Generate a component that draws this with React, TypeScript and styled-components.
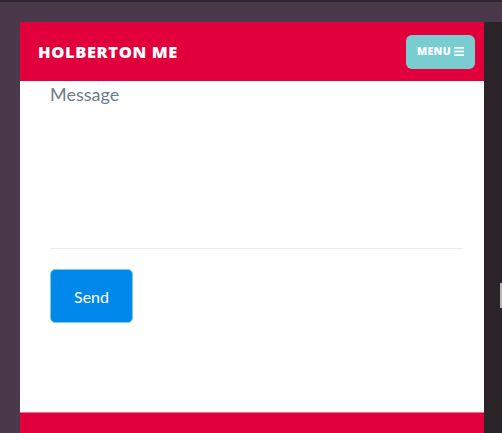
import React from 'react';
import styled, { createGlobalStyle } from 'styled-components';

const GlobalStyle = createGlobalStyle`
    html, body {
        margin: 0;
        padding: 0;
        background: #49394b;
        overflow: hidden;
    }
    body {
        border-top: 2px solid #2f2630;
    }
`;

const Desktop = styled.div`
    height: 431px;
    padding: 20px 0 0 20px;
    box-sizing: border-box;
    display: flex;
`;

const Window = styled.div`
    flex: 1;
    display: flex;
    height: 411px;
`;

const Page = styled.div`
    width: 464px;
    display: flex;
    flex-direction: column;
    background: #ffffff;
    font-family: Lato, "Open Sans", sans-serif;
`;

const ScrollTrack = styled.div`
    flex: 1;
    background: #2a2327;
    display: flex;
    justify-content: flex-end;
    padding-top: 261px;
`;

const ScrollThumb = styled.div`
    width: 2px;
    height: 25px;
    background: #b9b6b8;
`;

const Header = styled.header`
    height: 59px;
    background: #e1003c;
    display: flex;
    align-items: center;
    justify-content: space-between;
    padding: 0 9px 0 18px;
`;

const Brand = styled.div`
    color: #ffffff;
    font-family: "Open Sans", Lato, sans-serif;
    font-weight: 800;
    font-size: 16.5px;
    letter-spacing: 0.6px;
`;

const MenuButton = styled.button`
    width: 69px;
    height: 34px;
    border: none;
    border-radius: 6px;
    background: #79cdd1;
    color: #ffffff;
    font-family: "Open Sans", Lato, sans-serif;
    font-weight: 800;
    font-size: 10.5px;
    letter-spacing: 0.3px;
    display: flex;
    align-items: center;
    justify-content: center;
    gap: 3px;
    padding: 0 0 1px;
`;

const Content = styled.main`
    flex: 1;
    padding: 2px 21px 0 30px;
`;

const MessageField = styled.div`
    height: 165px;
    border-bottom: 1px solid #ececee;
    color: #6d7b8c;
    font-size: 18px;
`;

const SendButton = styled.button`
    margin-top: 20px;
    width: 83px;
    height: 54px;
    background: #0088ea;
    border: 1px solid #7ccfd6;
    border-radius: 5px;
    color: #ffffff;
    font-family: Lato, sans-serif;
    font-size: 16px;
`;

const Footer = styled.footer`
    height: 20px;
    background: #e1003c;
    border-top: 1px solid #e7708f;
`;

const BarsIcon = () => (
    <svg width="10" height="9" viewBox="0 0 10 9">
        <rect x="0" y="0" width="10" height="1.7" fill="#fff" />
        <rect x="0" y="3.6" width="10" height="1.7" fill="#fff" />
        <rect x="0" y="7.2" width="10" height="1.7" fill="#fff" />
    </svg>
);

const App = () => {
    return (
        <>
            <GlobalStyle />
            <Desktop>
                <Window>
                    <Page>
                        <Header>
                            <Brand>HOLBERTON ME</Brand>
                            <MenuButton>
                                MENU <BarsIcon />
                            </MenuButton>
                        </Header>
                        <Content>
                            <MessageField>Message</MessageField>
                            <SendButton>Send</SendButton>
                        </Content>
                        <Footer />
                    </Page>
                    <ScrollTrack>
                        <ScrollThumb />
                    </ScrollTrack>
                </Window>
            </Desktop>
        </>
    );
};

export default App;
